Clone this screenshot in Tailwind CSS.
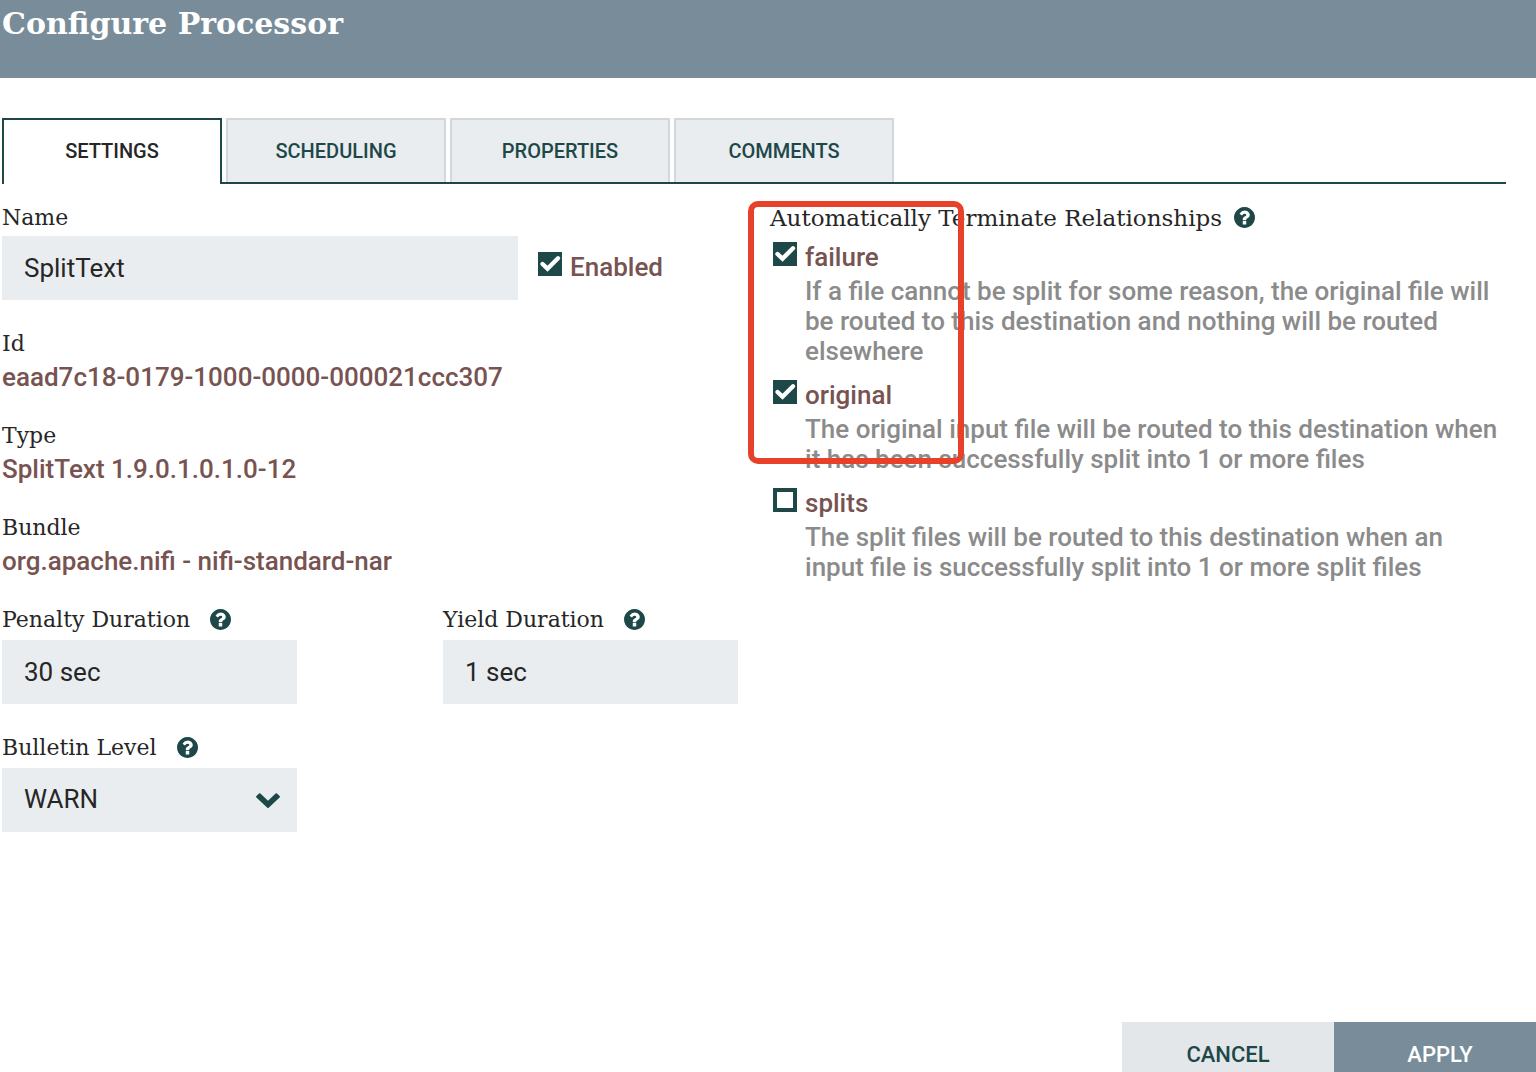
<!DOCTYPE html>
<html lang="en">
<head>
    <meta charset="UTF-8">
    <meta name="viewport" content="width=device-width, initial-scale=1.0">
    <title>Configure Processor</title>
    <script src="https://cdn.jsdelivr.net/npm/@tailwindcss/browser@4"></script>
</head>
<body class="bg-white font-['Roboto',sans-serif] text-[#262626]">
    <!-- Shared icons -->
    <svg class="hidden">
        <symbol id="icon-help" viewBox="0 0 1536 1536">
            <path fill="currentColor" d="M896 1248v-192q0-14-9-23t-23-9H672q-14 0-23 9t-9 23v192q0 14 9 23t23 9h192q14 0 23-9t9-23zm256-672q0-88-55.500-163T958 297t-170-41q-243 0-371 213-15 24 8 42l132 100q7 6 19 6 16 0 25-12 53-68 86-92 34-24 86-24 48 0 85.500 26t37.500 59q0 38-20 61t-68 45q-63 28-115.500 86.500T640 892v36q0 14 9 23t23 9h192q14 0 23-9t9-23q0-19 21.500-49.500T972 829q32-18 49-28.500t46-35 44.500-48 28-60.500 12.500-81zm384 192q0 209-103 385.500T1153.500 1433 768 1536t-385.500-103T103 1153.500 0 768t103-385.500T382.500 103 768 0t385.500 103T1433 382.500 1536 768z"/>
        </symbol>
        <symbol id="icon-check" viewBox="0 0 24 24">
            <path fill="none" stroke="currentColor" stroke-width="4.400" stroke-linecap="round" d="M4.500 12l5 4.700L20 6.300"/>
        </symbol>
    </svg>

    <div class="flex h-screen flex-col overflow-hidden">
        <!-- Header -->
        <header class="h-[78px] shrink-0 bg-[#788d99] px-0.5">
            <h1 class="font-['Roboto_Slab','DejaVu_Serif',serif] text-3xl leading-[48px] font-bold text-white">Configure Processor</h1>
        </header>

        <!-- Tabs -->
        <nav class="mt-10 mr-[30px] ml-0.5 flex gap-1 border-b-2 border-[#1e4848] text-xl leading-[30px] font-medium text-[#1e4848]">
            <button type="button" class="-mb-0.5 h-[66px] w-[220px] border-2 border-b-0 border-[#1e4848] bg-white pb-0.5 text-[#262626]">SETTINGS</button>
            <button type="button" class="h-16 w-[220px] border-2 border-b-0 border-[#d0d8da] bg-[#e9edf0]">SCHEDULING</button>
            <button type="button" class="h-16 w-[220px] border-2 border-b-0 border-[#d0d8da] bg-[#e9edf0]">PROPERTIES</button>
            <button type="button" class="h-16 w-[220px] border-2 border-b-0 border-[#d0d8da] bg-[#e9edf0]">COMMENTS</button>
        </nav>

        <!-- Settings -->
        <main class="mt-4 mr-[30px] ml-0.5 grid grid-cols-2 gap-8 text-[26px] leading-[30px]">
            <section class="flex flex-col gap-[26px]">
                <div>
                    <label for="name" class="block font-['Roboto_Slab','DejaVu_Serif',serif] text-[22px] leading-9">Name</label>
                    <div class="flex gap-5">
                        <input id="name" type="text" value="SplitText" class="h-16 w-[516px] bg-[#e9edf0] px-[22px] outline-none">
                        <label class="mt-4 flex gap-2 font-medium text-[#775351]">
                            <span class="relative size-6">
                                <input type="checkbox" checked class="peer block size-6 appearance-none border-4 border-[#1e4848] checked:bg-[#1e4848]">
                                <svg class="pointer-events-none absolute inset-0 hidden size-6 text-white peer-checked:block"><use href="#icon-check"/></svg>
                            </span>
                            Enabled
                        </label>
                    </div>
                </div>
                <div>
                    <h2 class="font-['Roboto_Slab','DejaVu_Serif',serif] text-[22px] leading-9">Id</h2>
                    <p class="font-medium text-[#775351]">eaad7c18-0179-1000-0000-000021ccc307</p>
                </div>
                <div>
                    <h2 class="font-['Roboto_Slab','DejaVu_Serif',serif] text-[22px] leading-9">Type</h2>
                    <p class="font-medium text-[#775351]">SplitText 1.9.0.1.0.1.0-12</p>
                </div>
                <div>
                    <h2 class="font-['Roboto_Slab','DejaVu_Serif',serif] text-[22px] leading-9">Bundle</h2>
                    <p class="font-medium text-[#775351]">org.apache.nifi - nifi-standard-nar</p>
                </div>
                <div class="flex justify-between">
                    <div class="w-[295px]">
                        <div class="mb-0.5 flex items-center gap-5">
                            <label for="penalty" class="font-['Roboto_Slab','DejaVu_Serif',serif] text-[22px] leading-9">Penalty Duration</label>
                            <svg class="mb-0.5 size-[21px] text-[#1e4848]"><use href="#icon-help"/></svg>
                        </div>
                        <input id="penalty" type="text" value="30 sec" class="h-16 w-full bg-[#e9edf0] px-[22px] outline-none">
                    </div>
                    <div class="w-[295px]">
                        <div class="mb-0.5 flex items-center gap-5">
                            <label for="yield" class="font-['Roboto_Slab','DejaVu_Serif',serif] text-[22px] leading-9">Yield Duration</label>
                            <svg class="mb-0.5 size-[21px] text-[#1e4848]"><use href="#icon-help"/></svg>
                        </div>
                        <input id="yield" type="text" value="1 sec" class="h-16 w-full bg-[#e9edf0] px-[22px] outline-none">
                    </div>
                </div>
                <div class="w-[295px]">
                    <div class="mb-0.5 flex items-center gap-5">
                        <label for="bulletin" class="font-['Roboto_Slab','DejaVu_Serif',serif] text-[22px] leading-9">Bulletin Level</label>
                        <svg class="mb-0.5 size-[21px] text-[#1e4848]"><use href="#icon-help"/></svg>
                    </div>
                    <div class="relative">
                        <select id="bulletin" class="block h-16 w-full appearance-none bg-[#e9edf0] px-[22px] pb-0.5 outline-none">
                            <option>DEBUG</option>
                            <option>INFO</option>
                            <option selected>WARN</option>
                            <option>ERROR</option>
                            <option>NONE</option>
                        </select>
                        <svg class="pointer-events-none absolute top-6 right-[17px] h-4 w-6 text-[#1e4848]" viewBox="0 0 24 16">
                            <path fill="currentColor" d="M.4 4 3 1.500q.7-.7 1.400 0L12 8.800 19.600 1.500q.7-.7 1.400 0L23.600 4q.7.700 0 1.400L12.700 15.700q-.7.600-1.400 0L.4 5.400q-.7-.7 0-1.400z"/>
                        </svg>
                    </div>
                </div>
            </section>

            <section class="relative">
                <div class="mb-1.5 flex items-center gap-3">
                    <h2 class="font-['Roboto_Slab','DejaVu_Serif',serif] text-[23px] leading-9">Automatically Terminate Relationships</h2>
                    <svg class="mb-0.5 size-[21px] text-[#1e4848]"><use href="#icon-help"/></svg>
                </div>
                <div class="flex flex-col gap-3.5 pl-[3px] font-medium">
                    <div>
                        <label class="flex gap-2 text-[#775351]">
                            <span class="relative size-6">
                                <input type="checkbox" checked class="peer block size-6 appearance-none border-4 border-[#1e4848] checked:bg-[#1e4848]">
                                <svg class="pointer-events-none absolute inset-0 hidden size-6 text-white peer-checked:block"><use href="#icon-check"/></svg>
                            </span>
                            failure
                        </label>
                        <p class="mt-1 pl-8 text-[#8b8b8b]">If a file cannot be split for some reason, the original file will be routed to this destination and nothing will be routed elsewhere</p>
                    </div>
                    <div>
                        <label class="flex gap-2 text-[#775351]">
                            <span class="relative size-6">
                                <input type="checkbox" checked class="peer block size-6 appearance-none border-4 border-[#1e4848] checked:bg-[#1e4848]">
                                <svg class="pointer-events-none absolute inset-0 hidden size-6 text-white peer-checked:block"><use href="#icon-check"/></svg>
                            </span>
                            original
                        </label>
                        <p class="mt-1 pl-8 text-[#8b8b8b]">The original input file will be routed to this destination when it has been successfully split into 1 or more files</p>
                    </div>
                    <div>
                        <label class="flex gap-2 text-[#775351]">
                            <span class="relative size-6">
                                <input type="checkbox" class="peer block size-6 appearance-none border-4 border-[#1e4848] checked:bg-[#1e4848]">
                                <svg class="pointer-events-none absolute inset-0 hidden size-6 text-white peer-checked:block"><use href="#icon-check"/></svg>
                            </span>
                            splits
                        </label>
                        <p class="mt-1 pl-8 text-[#8b8b8b]">The split files will be routed to this destination when an input file is successfully split into 1 or more split files</p>
                    </div>
                </div>
                <!-- Highlight around the relationships to tick -->
                <div class="pointer-events-none absolute top-px -left-[22px] h-[263px] w-[216px] rounded-[10px] border-[6px] border-[#e8412a]"></div>
            </section>
        </main>

        <!-- Actions -->
        <footer class="mt-auto flex h-[50px] shrink-0 justify-end text-[22px] leading-[30px] font-medium">
            <button type="button" class="h-[66px] w-[212px] bg-[#e3e7ea] text-[#1e4848]">CANCEL</button>
            <button type="button" class="-mr-2.5 h-[66px] w-[212px] bg-[#788d99] text-white">APPLY</button>
        </footer>
    </div>
</body>
</html>
